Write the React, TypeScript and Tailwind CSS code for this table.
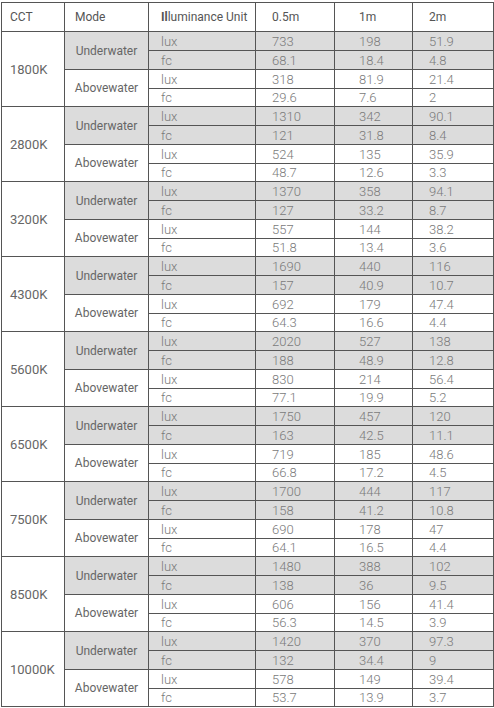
const data: [string, number[][]][] = [
  ["1800K", [[733, 198, 51.9], [68.1, 18.4, 4.8], [318, 81.9, 21.4], [29.6, 7.6, 2]]],
  ["2800K", [[1310, 342, 90.1], [121, 31.8, 8.4], [524, 135, 35.9], [48.7, 12.6, 3.3]]],
  ["3200K", [[1370, 358, 94.1], [127, 33.2, 8.7], [557, 144, 38.2], [51.8, 13.4, 3.6]]],
  ["4300K", [[1690, 440, 116], [157, 40.9, 10.7], [692, 179, 47.4], [64.3, 16.6, 4.4]]],
  ["5600K", [[2020, 527, 138], [188, 48.9, 12.8], [830, 214, 56.4], [77.1, 19.9, 5.2]]],
  ["6500K", [[1750, 457, 120], [163, 42.5, 11.1], [719, 185, 48.6], [66.8, 17.2, 4.5]]],
  ["7500K", [[1700, 444, 117], [158, 41.2, 10.8], [690, 178, 47], [64.1, 16.5, 4.4]]],
  ["8500K", [[1480, 388, 102], [138, 36, 9.5], [606, 156, 41.4], [56.3, 14.5, 3.9]]],
  ["10000K", [[1420, 370, 97.3], [132, 34.4, 9], [578, 149, 39.4], [53.7, 13.9, 3.7]]],
];

const units = ["lux", "fc", "lux", "fc"];
const heights = ["h-[19px]", "h-[19px]", "h-[19px]", "h-[18px]"];

export default function App() {
  return (
    <div
      className="w-[494px] h-[708px] bg-white pt-[2px] pl-[1px] text-[13px] text-[#7a7a7a]"
      style={{ fontFamily: "Roboto, 'Liberation Sans', sans-serif" }}
    >
      <table className="border-collapse table-fixed w-[492px] border border-[#555]">
        <colgroup>
          <col className="w-[63px]" />
          <col className="w-[84px]" />
          <col className="w-[107px]" />
          <col className="w-[79px]" />
          <col className="w-[78px]" />
          <col className="w-[81px]" />
        </colgroup>
        <thead>
          <tr className="h-[29px] leading-none text-[#555] text-[12px]">
            <th className="border border-[#555] font-normal text-left pl-[8px]">CCT</th>
            <th className="border border-[#555] font-normal text-left pl-[10px]">Mode</th>
            <th className="border border-[#555] font-normal text-left pl-[12px]">
              <span className="font-bold">Il</span>luminance Unit
            </th>
            <th className="border border-[#555] font-normal text-left pl-[16px]">0.5m</th>
            <th className="border border-[#555] font-normal text-left pl-[24px]">1m</th>
            <th className="border border-[#555] font-normal text-left pl-[16px]">2m</th>
          </tr>
        </thead>
        <tbody className="font-light">
          {data.map(([cct, rows]) =>
            rows.map((vals, i) => {
              const under = i < 2;
              const bg = under ? "bg-[#dcdcdc]" : "bg-white";
              const top = i % 2 === 0 ? "border-t-[#555]" : "border-t-[#8a8a8a]";
              return (
                <tr key={cct + i} className={`${heights[i]} leading-none ${bg}`}>
                  {i === 0 && (
                    <td
                      rowSpan={4}
                      className="bg-white border border-[#555] pl-[8px] text-[13px] text-[#666] font-normal"
                    >
                      {cct}
                    </td>
                  )}
                  {i % 2 === 0 && (
                    <td
                      rowSpan={2}
                      className="border border-[#555] text-center text-[12px] text-[#666] font-normal"
                    >
                      {under ? "Underwater" : "Abovewater"}
                    </td>
                  )}
                  <td className={`border border-[#555] ${top} p-0 pl-[12px]`}>{units[i]}</td>
                  <td className={`border border-[#555] ${top} p-0 pl-[16px]`}>{vals[0]}</td>
                  <td className={`border border-[#555] ${top} p-0 pl-[24px]`}>{vals[1]}</td>
                  <td className={`border border-[#555] ${top} p-0 pl-[16px]`}>{vals[2]}</td>
                </tr>
              );
            })
          )}
        </tbody>
      </table>
    </div>
  );
}
